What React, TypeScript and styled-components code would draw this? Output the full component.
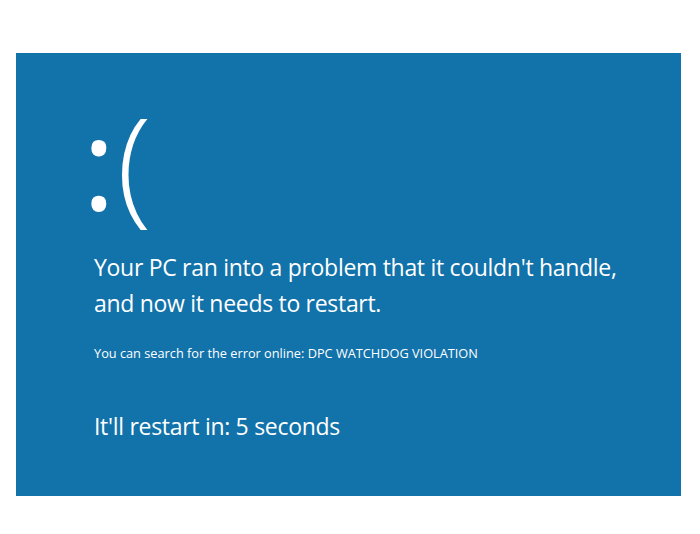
import React from "react";
import styled, { createGlobalStyle } from "styled-components";

const GlobalStyle = createGlobalStyle`
    html, body {
        margin: 0;
        padding: 0;
        background: #ffffff;
    }
    body {
        font-family: "Open Sans", "Noto Sans", "DejaVu Sans", sans-serif;
    }
`;

const Page = styled.div`
    width: 700px;
    height: 534px;
    padding: 53px 0 0 16px;
    box-sizing: border-box;
`;

const Screen = styled.div`
    width: 665px;
    height: 443px;
    background-color: #1272aa;
    color: #ffffff;
    padding: 0 0 0 78px;
    box-sizing: border-box;
    display: flex;
    flex-direction: column;
`;

const Face = styled.div`
    font-weight: 300;
    font-size: 128px;
    line-height: 1;
    margin-top: 44px;
    margin-left: -12px;
    height: 122px;
`;

// the eyes read heavier than the mouth in the original
const Eyes = styled.span`
    font-weight: 400;
    letter-spacing: 1px;
`;

const Message = styled.p`
    margin: 30px 0 0 0;
    font-size: 23px;
    letter-spacing: -0.3px;
    line-height: 36px;
    font-weight: 400;
`;

const Hint = styled.p`
    margin: 23px 0 0 0;
    font-size: 12.75px;
    line-height: 18px;
`;

const Countdown = styled.p`
    margin: 46px 0 0 0;
    font-size: 23px;
    letter-spacing: -0.3px;
    line-height: 36px;
`;

const App: React.FC = () => {
    const seconds = 5;

    return (
        <>
            <GlobalStyle />
            <Page>
                <Screen>
                    <Face>
                        <Eyes>:</Eyes>(
                    </Face>
                    <Message>
                        Your PC ran into a problem that it couldn't handle,
                        <br />
                        and now it needs to restart.
                    </Message>
                    <Hint>You can search for the error online: DPC WATCHDOG VIOLATION</Hint>
                    <Countdown>It'll restart in: {seconds} seconds</Countdown>
                </Screen>
            </Page>
        </>
    );
};

export default App;
